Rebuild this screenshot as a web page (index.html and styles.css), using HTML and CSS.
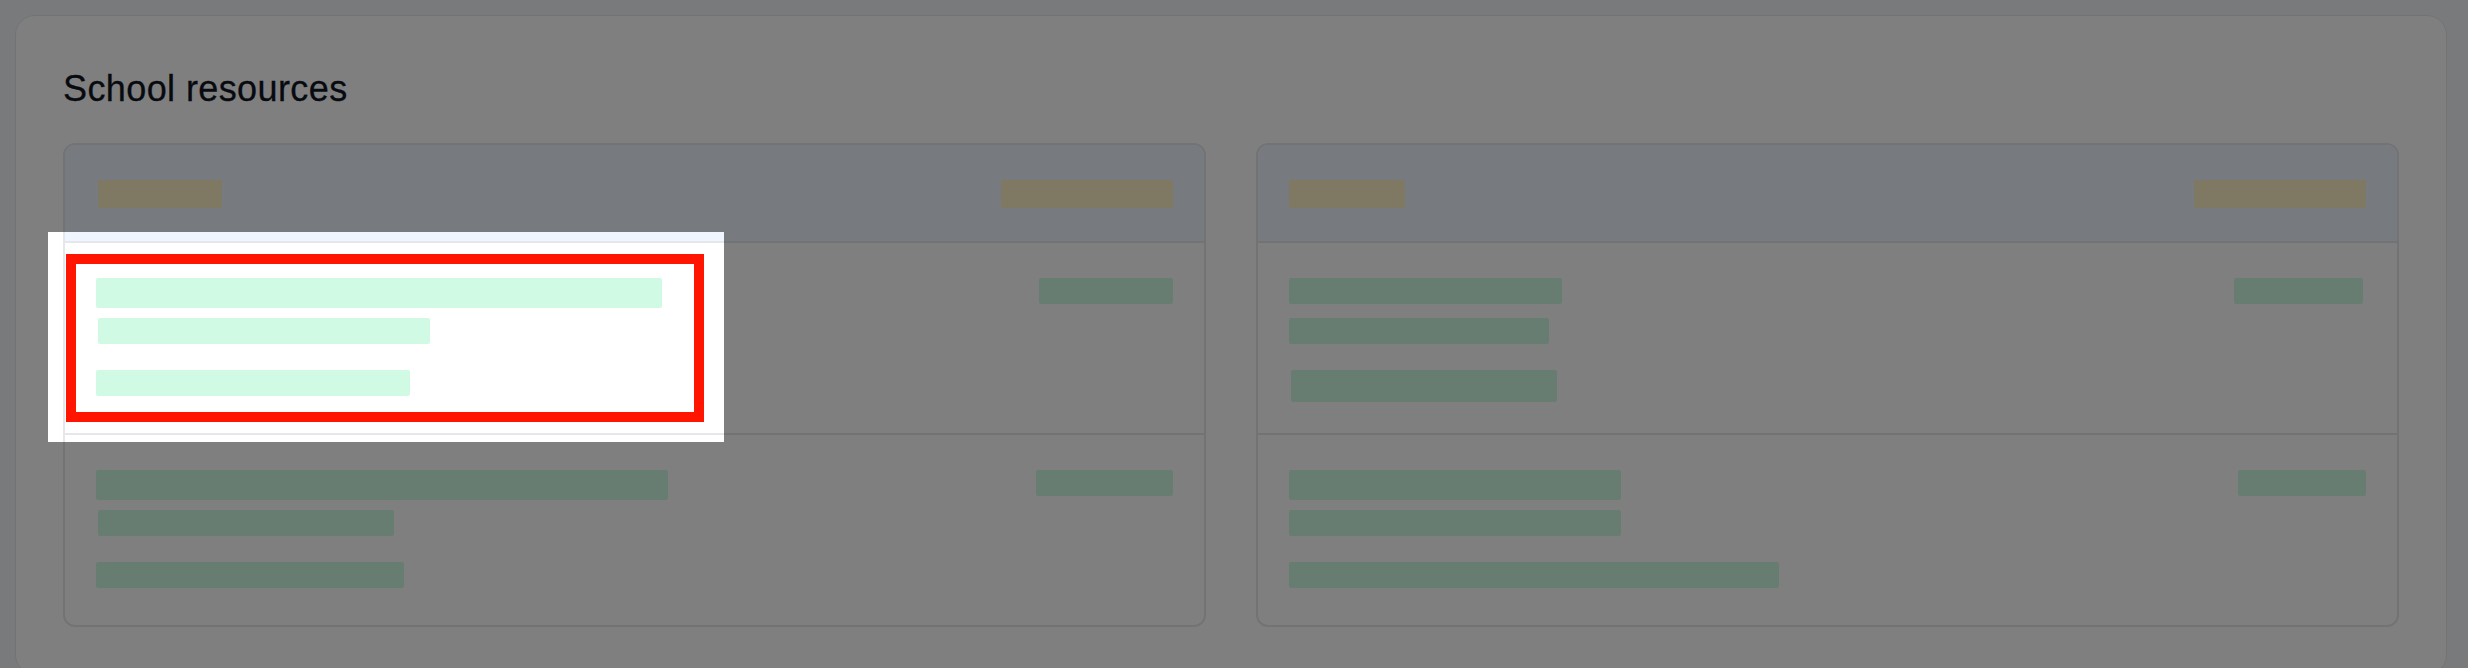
FILE: index.html
```html
<!DOCTYPE html>
<html lang="en">
<head>
    <meta charset="UTF-8">
    <meta name="viewport" content="width=device-width, initial-scale=1.0">
    <title>School resources</title>
    <link rel="stylesheet" href="styles.css">
</head>
<body>

    <div class="card">
        <h1>School resources</h1>

        <div class="panels">
            <!-- Left panel -->
            <div class="panel">
                <div class="panel-head">
                    <span class="bar bar-head shift w-124"></span>
                    <span class="bar bar-head w-172"></span>
                </div>
                <div class="row">
                    <div class="lines">
                        <span class="bar bar-title w-566"></span>
                        <span class="bar bar-sub shift w-332"></span>
                        <span class="bar bar-meta w-314"></span>
                    </div>
                    <span class="bar bar-badge w-134"></span>
                </div>
                <div class="row">
                    <div class="lines">
                        <span class="bar bar-title w-572"></span>
                        <span class="bar bar-sub shift w-296"></span>
                        <span class="bar bar-meta w-308"></span>
                    </div>
                    <span class="bar bar-badge w-137"></span>
                </div>
            </div>

            <!-- Right panel -->
            <div class="panel">
                <div class="panel-head">
                    <span class="bar bar-head w-116"></span>
                    <span class="bar bar-head w-172"></span>
                </div>
                <div class="row">
                    <div class="lines">
                        <span class="bar bar-title short w-273"></span>
                        <span class="bar bar-sub w-260"></span>
                        <span class="bar bar-meta tall shift w-266"></span>
                    </div>
                    <span class="bar bar-badge w-129 pull"></span>
                </div>
                <div class="row">
                    <div class="lines">
                        <span class="bar bar-title w-332"></span>
                        <span class="bar bar-sub w-332"></span>
                        <span class="bar bar-meta w-490"></span>
                    </div>
                    <span class="bar bar-badge w-128"></span>
                </div>
            </div>
        </div>
    </div>

    <!-- Guided tour: spotlight over the first resource -->
    <div class="tour-spot"></div>
    <div class="tour-ring"></div>

</body>
</html>
```

FILE: styles.css
```css
body {
    font-family: "Liberation Sans", Arial, sans-serif;
    background-color: #f3f4f6;
    margin: 0;
    padding: 15px 21px 0 15px;
    overflow: hidden;
}

.card {
    background-color: #fff;
    border: 1px solid #e5e7eb;
    border-radius: 20px;
    padding: 51px 47px 47px;
}

h1 {
    margin: 0 0 32px;
    font-size: 36px;
    line-height: 44px;
    font-weight: 400;
    letter-spacing: 0.4px;
    color: #0f1520;
    -webkit-text-stroke: 0.3px #0f1520;
}

.panels {
    display: grid;
    grid-template-columns: 1fr 1fr;
    gap: 50px;
}

.panel {
    border: 2px solid #e5e7eb;
    border-radius: 12px;
    overflow: hidden;
}

.panel-head {
    display: flex;
    justify-content: space-between;
    background-color: #eff6ff;
    border-bottom: 2px solid #e5e7eb;
    padding: 35px 31px 33px 31px;
}

.row {
    display: flex;
    justify-content: space-between;
    align-items: flex-start;
    height: 155px;
    padding: 35px 31px 0;
}

.row + .row {
    border-top: 2px solid #e5e7eb;
}

.lines {
    display: flex;
    flex-direction: column;
    align-items: flex-start;
}

/* placeholder bars (redacted text) */
.bar {
    display: block;
    border-radius: 2px;
    background-color: #d1fae5;
}

.bar-head {
    height: 28px;
    background-color: #fef3c7;
}

.bar-title {
    height: 30px;
}

.bar-title.short {
    height: 26px;
    margin-bottom: 4px;
}

.bar-sub {
    height: 26px;
    margin-top: 10px;
}

.bar-meta {
    height: 26px;
    margin-top: 26px;
}

.bar-meta.tall {
    height: 32px;
}

.bar-badge {
    height: 26px;
}

.shift {
    margin-left: 2px;
}

.pull {
    margin-right: 3px;
}

.w-116 { width: 116px; }
.w-124 { width: 124px; }
.w-128 { width: 128px; }
.w-129 { width: 129px; }
.w-134 { width: 134px; }
.w-137 { width: 137px; }
.w-172 { width: 172px; }
.w-260 { width: 260px; }
.w-266 { width: 266px; }
.w-273 { width: 273px; }
.w-296 { width: 296px; }
.w-308 { width: 308px; }
.w-314 { width: 314px; }
.w-332 { width: 332px; }
.w-490 { width: 490px; }
.w-566 { width: 566px; }
.w-572 { width: 572px; }

/* tour overlay */
.tour-spot {
    position: absolute;
    top: 232px;
    left: 48px;
    width: 676px;
    height: 210px;
    box-shadow: 0 0 0 4000px rgba(0, 0, 0, 0.5);
    z-index: 10;
}

.tour-ring {
    position: absolute;
    top: 254px;
    left: 66px;
    width: 638px;
    height: 168px;
    box-sizing: border-box;
    border: 10px solid #ff1500;
    z-index: 11;
}
```
